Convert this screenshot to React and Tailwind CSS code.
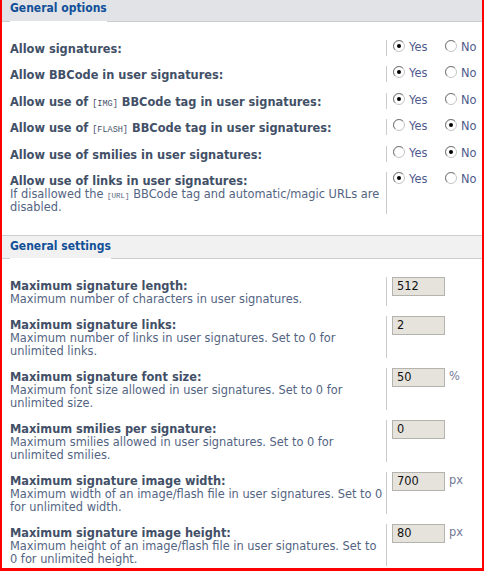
import React from "react";

function Radio({ checked }) {
  return (
    <svg width="12" height="12" viewBox="0 0 12 12" className="shrink-0">
      <circle cx="6" cy="6" r="5.5" fill="#ffffff" stroke="#c4c4c4" />
      <path d="M2.1 9.9 A5.5 5.5 0 0 1 9.9 2.1" fill="none" stroke="#7a7a7a" />
      {checked && <circle cx="6" cy="6" r="2" fill="#000000" />}
    </svg>
  );
}

function YesNo({ yes }) {
  return (
    <div className="flex items-start text-[11.4px] leading-[13px] text-[#4f5a8c]">
      <label className="flex items-start w-[52px]">
        <Radio checked={yes} />
        <span className="ml-[4px] mt-[1px]">Yes</span>
      </label>
      <label className="flex items-start">
        <Radio checked={!yes} />
        <span className="ml-[4px] mt-[1px]">No</span>
      </label>
    </div>
  );
}

function Code({ children, small }) {
  return (
    <span
      className={
        "font-['Liberation_Mono',monospace] font-normal uppercase leading-none " +
        (small ? "text-[7.5px]" : "text-[8.5px]")
      }
    >
      {children}
    </span>
  );
}

function Header({ title, first }) {
  return (
    <div
      className={
        "flex px-[8px] border-b border-[#cccccc] " +
        (first ? "h-[22px] bg-[#e1e3e7]" : "h-[24px] border-t bg-[#f1f1f1] pt-[2px]")
      }
    >
      <span className="self-stretch -mb-px border-b border-white font-['DejaVu_Sans_Condensed','Liberation_Sans',sans-serif] text-[12px] leading-[16px] font-bold text-[#115098]">
        {title}
      </span>
    </div>
  );
}

function Row({ label, explain, children }) {
  return (
    <div className="flex items-stretch">
      <div className="w-[376px] shrink-0 pt-[3px] text-[11.4px] leading-[13px]">
        <div className="font-bold text-[#425067]">{label}</div>
        {explain && <div className="text-[#536482]">{explain}</div>}
      </div>
      <div className="flex-1 border-l border-[#cccccc]">{children}</div>
    </div>
  );
}

function NumInput({ value, suffix }) {
  return (
    <div className="flex items-start pl-[5px]">
      <div className="w-[53px] h-[19px] border border-[#b5b3ae] bg-[#e6e3dd] pl-[4px] text-[11.4px] leading-[17px] text-[#111111]">
        {value}
      </div>
      {suffix && (
        <span className="ml-[4px] mt-[2px] text-[11.4px] leading-[13px] text-[#727895]">
          {suffix}
        </span>
      )}
    </div>
  );
}

export default function App() {
  const options = [
    { label: "Allow signatures:", yes: true },
    { label: "Allow BBCode in user signatures:", yes: true },
    {
      label: (
        <>
          Allow use of <Code>[IMG]</Code> BBCode tag in user signatures:
        </>
      ),
      yes: true,
    },
    {
      label: (
        <>
          Allow use of <Code>[FLASH]</Code> BBCode tag in user signatures:
        </>
      ),
      yes: false,
    },
    { label: "Allow use of smilies in user signatures:", yes: false },
    {
      label: "Allow use of links in user signatures:",
      explain: (
        <>
          If disallowed the <Code small>[URL]</Code> BBCode tag and automatic/magic URLs are
          disabled.
        </>
      ),
      yes: true,
    },
  ];

  const settings = [
    {
      label: "Maximum signature length:",
      explain: "Maximum number of characters in user signatures.",
      value: "512",
    },
    {
      label: "Maximum signature links:",
      explain: "Maximum number of links in user signatures. Set to 0 for unlimited links.",
      value: "2",
    },
    {
      label: "Maximum signature font size:",
      explain: "Maximum font size allowed in user signatures. Set to 0 for unlimited size.",
      value: "50",
      suffix: "%",
    },
    {
      label: "Maximum smilies per signature:",
      explain: "Maximum smilies allowed in user signatures. Set to 0 for unlimited smilies.",
      value: "0",
    },
    {
      label: "Maximum signature image width:",
      explain:
        "Maximum width of an image/flash file in user signatures. Set to 0 for unlimited width.",
      value: "700",
      suffix: "px",
    },
    {
      label: "Maximum signature image height:",
      explain:
        "Maximum height of an image/flash file in user signatures. Set to 0 for unlimited height.",
      value: "80",
      suffix: "px",
    },
  ];

  return (
    <div className="w-[484px] h-[572px] bg-white font-['DejaVu_Sans',Verdana,sans-serif]">
      <div className="w-[484px] border-l-2 border-r-2 border-b-[3px] border-[#ff0000] bg-white">
        <Header title="General options" first />
        <div className="flex flex-col gap-[10.4px] pl-[8px] pt-[18px] pb-[21px]">
          {options.map((o, i) => (
            <Row key={i} label={o.label} explain={o.explain}>
              <div className="pl-[6px]">
                <YesNo yes={o.yes} />
              </div>
            </Row>
          ))}
        </div>
        <Header title="General settings" />
        <div className="flex flex-col gap-[10px] pl-[8px] pt-[18px] pb-[2px]">
          {settings.map((s, i) => (
            <Row key={i} label={s.label} explain={s.explain}>
              <NumInput value={s.value} suffix={s.suffix} />
            </Row>
          ))}
        </div>
      </div>
    </div>
  );
}
